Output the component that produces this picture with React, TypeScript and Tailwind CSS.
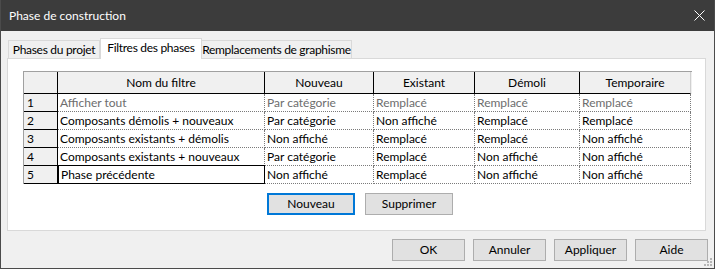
import React from "react";

const font = { fontFamily: 'Lato, "Noto Sans", sans-serif' };

type Row = { n: string; cells: string[]; gray?: boolean };

const rows: Row[] = [
  { n: "1", cells: ["Afficher tout", "Par catégorie", "Remplacé", "Remplacé", "Remplacé"], gray: true },
  { n: "2", cells: ["Composants démolis + nouveaux", "Par catégorie", "Non affiché", "Remplacé", "Remplacé"] },
  { n: "3", cells: ["Composants existants + démolis", "Non affiché", "Remplacé", "Remplacé", "Non affiché"] },
  { n: "4", cells: ["Composants existants + nouveaux", "Par catégorie", "Remplacé", "Non affiché", "Non affiché"] },
  { n: "5", cells: ["Phase précédente", "Non affiché", "Remplacé", "Non affiché", "Non affiché"] },
];

const headers = ["Nom du filtre", "Nouveau", "Existant", "Démoli", "Temporaire"];

function Btn({ label, primary, w }: { label: string; primary?: boolean; w: string }) {
  return (
    <div
      className={
        "h-[22px] flex items-center justify-center bg-[#e1e1e1] text-black leading-none " +
        w +
        (primary ? " border-2 border-[#0078d7]" : " border border-[#adadad]")
      }
    >
      {label}
    </div>
  );
}

export default function App() {
  return (
    <div
      className="w-[715px] h-[269px] bg-[#f0f0f0] border-x border-b border-[#4b4b4b] flex flex-col text-[12px] text-black relative overflow-hidden"
      style={font}
    >
      {/* Title bar */}
      <div className="h-[31px] bg-[#3c3c3c] flex items-center pl-[9px] pr-[9px] -mx-px shrink-0">
        <span className="text-white text-[12px] leading-none">Phase de construction</span>
        <div className="flex-1" />
        <svg width="11" height="11" viewBox="0 0 11 11" className="mr-[1px]">
          <path d="M0.5 0.5 L10.5 10.5 M10.5 0.5 L0.5 10.5" stroke="#ffffff" strokeWidth="1" />
        </svg>
      </div>

      {/* Body */}
      <div className="flex flex-col pl-[6px] pr-[7px]">
        {/* Tabs */}
        <div className="flex items-end h-[27px] pl-[1px] pr-[1px] whitespace-nowrap tracking-[-0.3px]">
          <div className="w-[92px] shrink-0 h-[18px] border border-b-0 border-[#d9d9d9] bg-[#f0f0f0] flex items-center justify-center leading-none">
            Phases du projet
          </div>
          <div className="w-[102px] shrink-0 h-[21px] border border-b-0 border-[#d9d9d9] bg-white flex items-center justify-center leading-none -mb-px relative z-10 pb-[3px]">
            Filtres des phases
          </div>
          <div className="w-[150px] shrink-0 h-[18px] border border-b-0 border-l-0 border-[#d9d9d9] bg-[#f0f0f0] flex items-center justify-center leading-none">
            Remplacements de graphisme
          </div>
        </div>

        {/* Panel */}
        <div className="w-[699px] h-[173px] border border-[#d9d9d9] bg-white flex flex-col">
          <div className="mt-[12px] ml-[15px] w-[669px] border-t border-l border-[#a0a0a0]">
            {/* Header */}
            <div className="grid grid-cols-[34px_207px_109px_101px_105px_111px] h-[22px] bg-[#f0f0f0]">
              <div className="border-r border-b border-black" />
              {headers.map((h, i) => (
                <div
                  key={h}
                  className={
                    "border-b border-black flex items-center justify-center leading-none " +
                    (i < headers.length - 1 ? "border-r" : "border-r border-r-[#d0d0d0]")
                  }
                >
                  {h}
                </div>
              ))}
            </div>
            {/* Rows */}
            {rows.map((r) => (
              <div key={r.n} className="grid grid-cols-[34px_207px_109px_101px_105px_111px] h-[18px]">
                <div className="bg-[#f0f0f0] border-r border-b border-black flex items-center pl-[3px] leading-none">
                  {r.n}
                </div>
                {r.cells.map((c, i) => {
                  const focused = r.n === "5" && i === 0;
                  return (
                    <div
                      key={i}
                      className={
                        "flex items-center pl-[2px] leading-none whitespace-nowrap overflow-hidden " +
                        (r.gray ? "text-[#6d6d6d] " : "text-black ") +
                        (focused
                          ? "border border-black -mt-px h-[19px]"
                          : "border-r border-b border-dotted border-[#7a7a7a]")
                      }
                    >
                      {c}
                    </div>
                  );
                })}
              </div>
            ))}
          </div>

          {/* Nouveau / Supprimer */}
          <div className="flex mt-[9px] ml-[259px] gap-[10px]">
            <Btn label="Nouveau" primary w="w-[88px]" />
            <Btn label="Supprimer" w="w-[88px]" />
          </div>
        </div>

        {/* Bottom buttons */}
        <div className="flex justify-end gap-[8px] mt-[8px] -mr-px">
          <Btn label="OK" w="w-[73px]" />
          <Btn label="Annuler" w="w-[73px]" />
          <Btn label="Appliquer" w="w-[73px]" />
          <Btn label="Aide" w="w-[73px]" />
        </div>
      </div>

      {/* Resize grip */}
      <svg width="9" height="9" viewBox="0 0 9 9" className="absolute right-[1px] bottom-[1px]">
        <rect x="6" y="0" width="2" height="2" fill="#b5b5b5" />
        <rect x="3" y="3" width="2" height="2" fill="#b5b5b5" />
        <rect x="6" y="3" width="2" height="2" fill="#b5b5b5" />
        <rect x="0" y="6" width="2" height="2" fill="#b5b5b5" />
        <rect x="3" y="6" width="2" height="2" fill="#b5b5b5" />
        <rect x="6" y="6" width="2" height="2" fill="#b5b5b5" />
      </svg>
    </div>
  );
}
